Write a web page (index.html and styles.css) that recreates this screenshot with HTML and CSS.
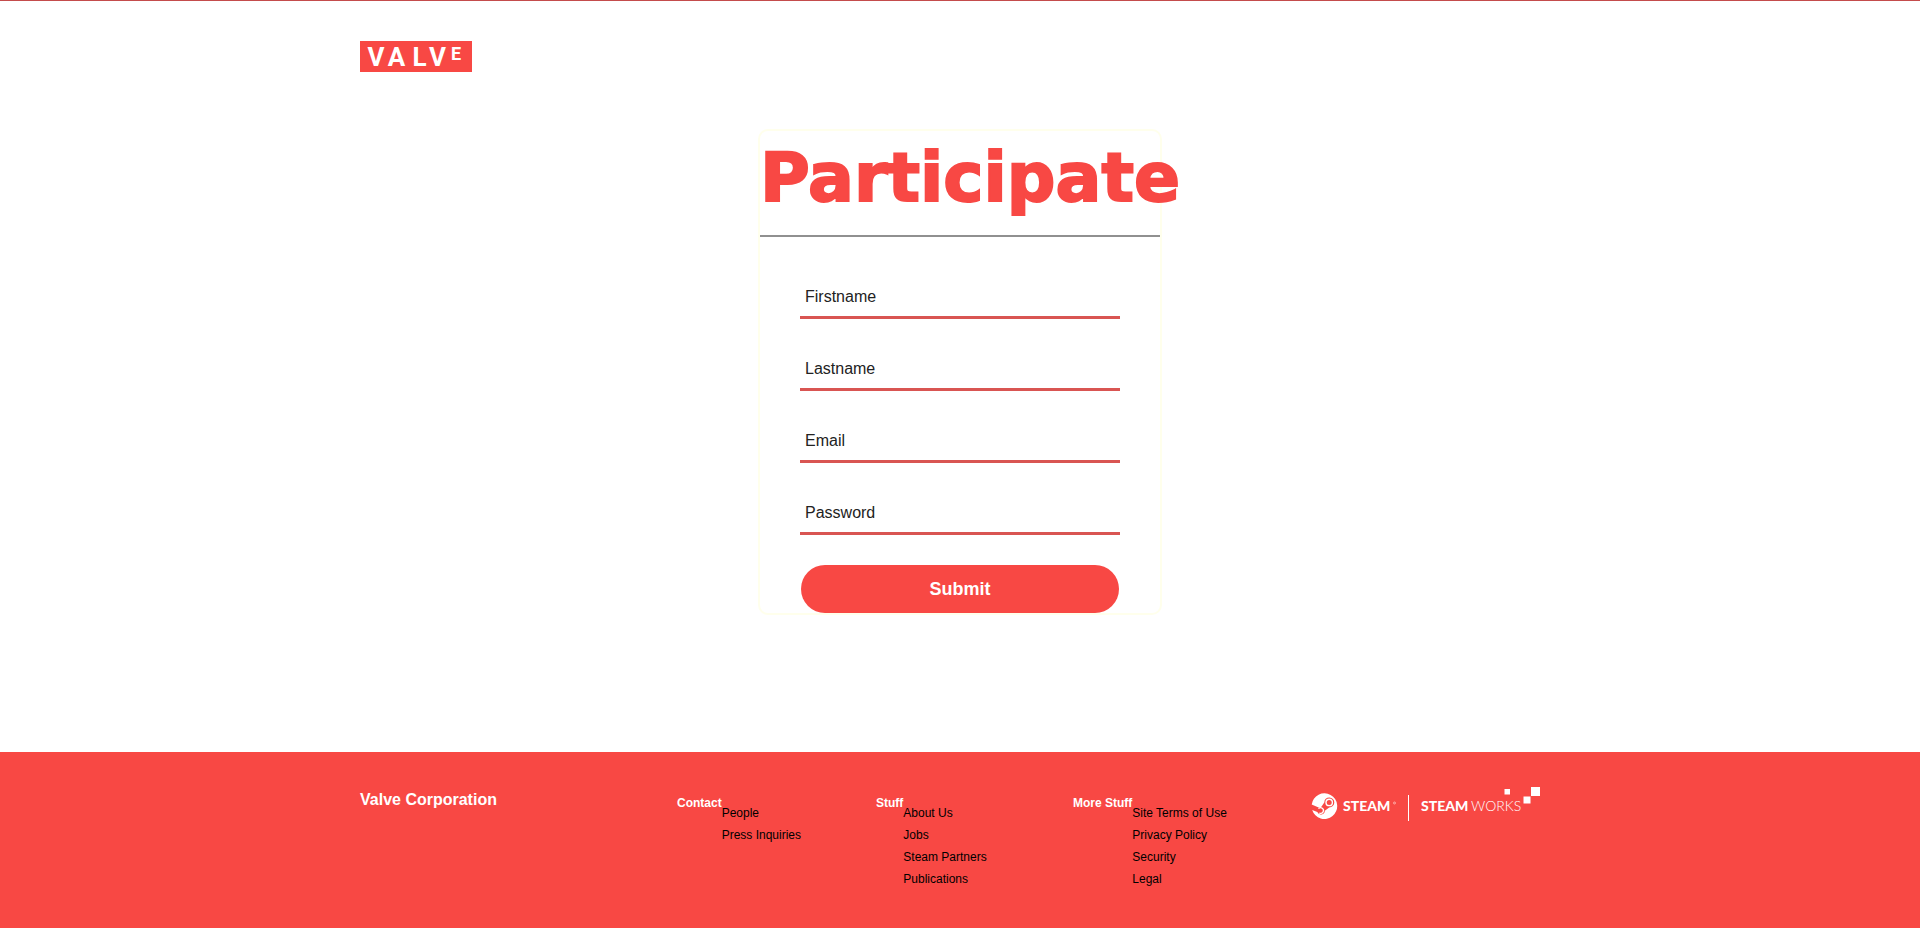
FILE: index.html
```html
<!DOCTYPE html>
<html lang="en">
<head>
<meta charset="utf-8">
<meta name="viewport" content="width=device-width, initial-scale=1">
<title>Valve - Participate</title>
<link rel="stylesheet" href="styles.css">
</head>
<body>
<header class="site-header">
  <div class="container">
    <a class="logo" href="#" aria-label="Valve">
      <svg width="112" height="31" viewBox="0 0 112 31">
        <g fill="#fff" font-family="Roboto, sans-serif" font-weight="700" text-anchor="middle">
          <text y="25" font-size="26" x="16 36.500">VA</text>
          <text y="25" font-size="26" x="59.500 77.500">LV</text>
          <text y="19" font-size="18" x="96">E</text>
        </g>
      </svg>
    </a>
  </div>
</header>
<main class="content">
  <form class="card">
    <h1 class="card-title">Participate</h1>
    <div class="fields">
      <input class="field" type="text" placeholder="Firstname" aria-label="Firstname">
      <input class="field" type="text" placeholder="Lastname" aria-label="Lastname">
      <input class="field" type="email" placeholder="Email" aria-label="Email">
      <input class="field" type="password" placeholder="Password" aria-label="Password">
    </div>
    <button class="submit" type="submit">Submit</button>
  </form>
</main>
<footer class="site-footer">
  <div class="container footer-grid">
    <h2 class="company">Valve Corporation</h2>
    <section class="link-group">
      <h3 class="link-heading">Contact</h3>
      <ul class="links">
        <li><a href="#">People</a></li>
        <li><a href="#">Press Inquiries</a></li>
      </ul>
    </section>
    <section class="link-group">
      <h3 class="link-heading">Stuff</h3>
      <ul class="links">
        <li><a href="#">About Us</a></li>
        <li><a href="#">Jobs</a></li>
        <li><a href="#">Steam Partners</a></li>
        <li><a href="#">Publications</a></li>
      </ul>
    </section>
    <section class="link-group">
      <h3 class="link-heading">More Stuff</h3>
      <ul class="links">
        <li><a href="#">Site Terms of Use</a></li>
        <li><a href="#">Privacy Policy</a></li>
        <li><a href="#">Security</a></li>
        <li><a href="#">Legal</a></li>
      </ul>
    </section>
    <div class="brands">
      <a href="#" aria-label="Steam">
        <svg width="98" height="36" viewBox="0 0 98 36">
          <path fill="#fff" d="M.7 17.500A12.800 12.800 0 1 1 1.200 23L6.300 25.100A3.900 3.900 0 0 0 13.800 23.700L18.200 20.400A5 5 0 1 0 13.300 15.400L10.200 20A3.900 3.900 0 0 0 7.600 20.600Z"/>
          <circle cx="18.200" cy="15.400" r="3.200" fill="none" stroke="#fff" stroke-width="1.400"/>
          <path d="M7.500 21.700A2.800 2.800 0 1 1 8.300 26" fill="none" stroke="#fff" stroke-width="1.300"/>
          <text x="32" y="24" fill="#fff" font-family="Lato, sans-serif" font-weight="900" font-size="14">STEAM</text>
          <circle cx="83.500" cy="16" r="1" fill="none" stroke="#fff" stroke-width=".5"/>
          <path fill="#fff" d="M97 8h1v26h-1z"/>
        </svg>
      </a>
      <a href="#" aria-label="Steamworks">
        <svg width="120" height="36" viewBox="0 0 120 36">
          <g fill="#fff" font-family="Lato, sans-serif" font-size="14">
            <text x="1" y="24" font-weight="900">STEAM</text>
            <text x="51" y="24" font-weight="300">WORKS</text>
          </g>
          <path fill="#fff" d="M84.500 2h5.500v5.500h-5.500zM103.500 9.500h7v7h-7zM111 0h9v9h-9z"/>
        </svg>
      </a>
    </div>
  </div>
</footer>
</body>
</html>
```
FILE: styles.css
```css
* { box-sizing: border-box; }

body {
  margin: 0;
  min-height: 100vh;
  display: flex;
  flex-direction: column;
  border-top: 1px solid #c44c4c;
  background: #fff;
  font-family: Arial, "Liberation Sans", sans-serif;
}

h1, h2, h3, ul { margin: 0; padding: 0; }

.container {
  width: 100%;
  max-width: 1200px;
  margin: 0 auto;
}

.site-header { padding: 40px 0 57px; }

.logo {
  display: block;
  width: 112px;
  background: #f84844;
}

.logo svg, .brands svg { display: block; }

.content {
  flex: 1;
  display: flex;
  justify-content: center;
  align-items: flex-start;
}

.card {
  width: 404px;
  border: 2px solid #ffffec;
  border-radius: 10px;
}

.card-title {
  padding-bottom: 10px;
  border-bottom: 2px solid #909090;
  color: #f84844;
  font-family: "Arial Black", "DejaVu Sans", sans-serif;
  font-size: 68px;
  font-weight: 900;
  line-height: 94px;
  -webkit-text-stroke: 2px #f84844;
}

.fields {
  display: flex;
  flex-direction: column;
  gap: 32px;
  padding: 42px 40px 30px;
}

.field {
  width: 100%;
  height: 40px;
  padding: 0 5px 1px;
  border: 0;
  border-bottom: 3px solid #d95552;
  background: transparent;
  font: inherit;
  font-size: 16px;
}

.field::placeholder { color: #222; opacity: 1; }

.submit {
  display: block;
  width: 318px;
  height: 48px;
  margin: 0 auto;
  padding: 0;
  border: 0;
  border-radius: 24px;
  background: #f84844;
  color: #fff;
  font: inherit;
  font-size: 18px;
  font-weight: 700;
}

.site-footer {
  padding: 35px 0 38px;
  background: #f84844;
  color: #fff;
}

.footer-grid {
  display: grid;
  grid-template-columns: 317fr 199fr 197fr 238fr 249fr;
}

.company {
  padding-top: 3px;
  font-size: 16px;
  line-height: 20px;
}

.link-group { display: flex; padding-top: 8px; }

.link-heading {
  font-size: 12px;
  line-height: 16px;
}

.links {
  padding-top: 7px;
  list-style: none;
  font-size: 12px;
  line-height: 22px;
}

.links a { color: #000; text-decoration: none; }

.brands { display: flex; gap: 11px; }
```
